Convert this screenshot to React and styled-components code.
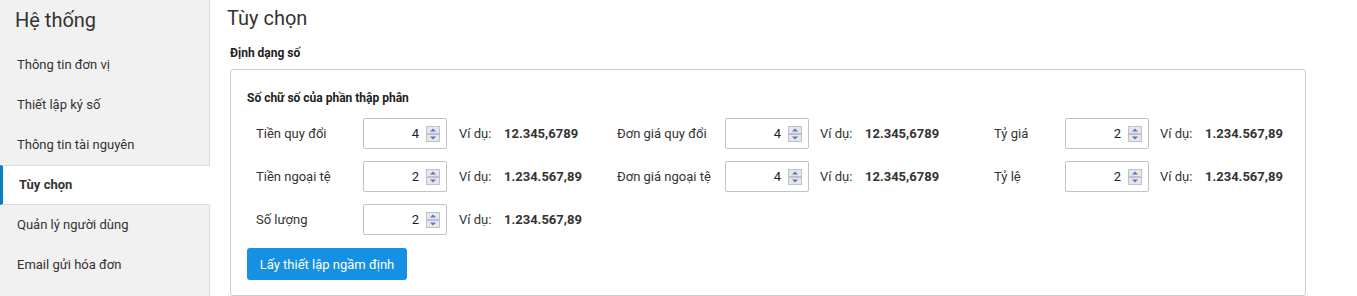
import React from 'react'
import styled, { createGlobalStyle } from 'styled-components'

const GlobalStyle = createGlobalStyle`
  body {
    margin: 0;
    background: #fff;
    font-family: Roboto, "Liberation Sans", Arial, sans-serif;
    color: #333;
  }
`;

const menu = [
    'Thông tin đơn vị',
    'Thiết lập ký số',
    'Thông tin tài nguyên',
    'Tùy chọn',
    'Quản lý người dùng',
    'Email gửi hóa đơn',
];

const fields = [
    { label: 'Tiền quy đổi', value: 4, sample: '12.345,6789', labelWidth: 107, gap: 12 },
    { label: 'Đơn giá quy đổi', value: 4, sample: '12.345,6789', labelWidth: 108, gap: 11 },
    { label: 'Tỷ giá', value: 2, sample: '1.234.567,89', labelWidth: 71, gap: 11 },
    { label: 'Tiền ngoại tệ', value: 2, sample: '1.234.567,89', labelWidth: 107, gap: 12 },
    { label: 'Đơn giá ngoại tệ', value: 4, sample: '12.345,6789', labelWidth: 108, gap: 11 },
    { label: 'Tỷ lệ', value: 2, sample: '1.234.567,89', labelWidth: 71, gap: 11 },
    { label: 'Số lượng', value: 2, sample: '1.234.567,89', labelWidth: 107, gap: 12 },
];

const Spinner = () => (
    <svg width="14" height="16" viewBox="0 0 14 16">
        <rect x="0.5" y="0.5" width="13" height="7" fill="#e6e7ec" stroke="#bfc1c8" />
        <rect x="0.5" y="8.5" width="13" height="7" fill="#e6e7ec" stroke="#bfc1c8" />
        <path d="M4 5.5 L7 2.5 L10 5.5 Z" fill="#5d73c6" />
        <path d="M4 10.5 L7 13.5 L10 10.5 Z" fill="#5d73c6" />
    </svg>
);

const App = () => {
    return (
        <Page>
            <GlobalStyle />
            <Sidebar>
                <SideTitle>Hệ thống</SideTitle>
                {menu.map((m) => (
                    <MenuItem key={m} $active={m === 'Tùy chọn'}>{m}</MenuItem>
                ))}
            </Sidebar>
            <Main>
                <Title>Tùy chọn</Title>
                <SubTitle>Định dạng số</SubTitle>
                <Box>
                    <BoxHeading>Số chữ số của phần thập phân</BoxHeading>
                    <Grid>
                        {fields.map((f) => (
                            <Field key={f.label}>
                                <Label style={{ width: f.labelWidth }}>{f.label}</Label>
                                <NumberBox>
                                    <NumberValue>{f.value}</NumberValue>
                                    <Spinner />
                                </NumberBox>
                                <Example $gap={f.gap}>Ví dụ:</Example>
                                <Sample>{f.sample}</Sample>
                            </Field>
                        ))}
                    </Grid>
                    <Button>Lấy thiết lập ngầm định</Button>
                </Box>
            </Main>
        </Page>
    )
}

const Page = styled.div`
display: flex;
min-height: 296px;
`;

const Sidebar = styled.div`
width: 210px;
flex-shrink: 0;
background-color: #f1f1f1;
box-shadow: inset -1px 0 0 #dcdcdc;
min-height: 296px;
`;

const SideTitle = styled.div`
height: 45px;
padding-left: 15px;
font-size: 20px;
line-height: 40px;
color: #333;
`;

const MenuItem = styled.div`
height: ${p => p.$active ? '38px' : '40px'};
line-height: ${p => p.$active ? '38px' : '40px'};
padding-left: 17px;
font-size: 13px;
color: #333;
${p => p.$active && `
    background: #fff;
    font-weight: bold;
    border-top: 1px solid #dcdcdc;
    border-bottom: 1px solid #dcdcdc;
    padding-left: 16px;
    border-left: 3px solid #0b7dc4;
`}
`;

const Main = styled.div`
flex: 1;
padding: 6px 51px 0 17px;
`;

const Title = styled.div`
font-size: 20px;
line-height: 24px;
color: #333;
`;

const SubTitle = styled.div`
margin: 15px 0 8px 3px;
font-size: 12px;
line-height: 16px;
font-weight: bold;
color: #222;
`;

const Box = styled.div`
margin-left: 3px;
border: 1px solid #cccccc;
border-radius: 3px;
padding: 20px 16px 14px;
height: 227px;
box-sizing: border-box;
`;

const BoxHeading = styled.div`
font-size: 12px;
line-height: 16px;
font-weight: bold;
color: #222;
margin-bottom: 12px;
`;

const Grid = styled.div`
display: grid;
grid-template-columns: 361px 377px 1fr;
row-gap: 12px;
padding-left: 9px;
`;

const Field = styled.div`
display: flex;
align-items: center;
height: 31px;
font-size: 13px;
`;

const Label = styled.div`
color: #333;
`;

const NumberBox = styled.div`
display: flex;
align-items: center;
width: 84px;
height: 31px;
box-sizing: border-box;
border: 1px solid #c2c2c2;
border-radius: 2px;
padding: 0 6px 0 8px;
gap: 7px;
`;

const NumberValue = styled.span`
flex: 1;
text-align: right;
font-size: 13px;
color: #222;
`;

const Example = styled.span`
margin-left: ${p => p.$gap}px;
width: 45px;
color: #333;
`;

const Sample = styled.span`
font-weight: bold;
color: #333;
`;

const Button = styled.button`
margin-top: 13px;
width: 160px;
height: 32px;
border: none;
border-radius: 3px;
background-color: #1590e2;
color: #fff;
font-family: inherit;
font-size: 13px;
cursor: pointer;
`;

export default App
